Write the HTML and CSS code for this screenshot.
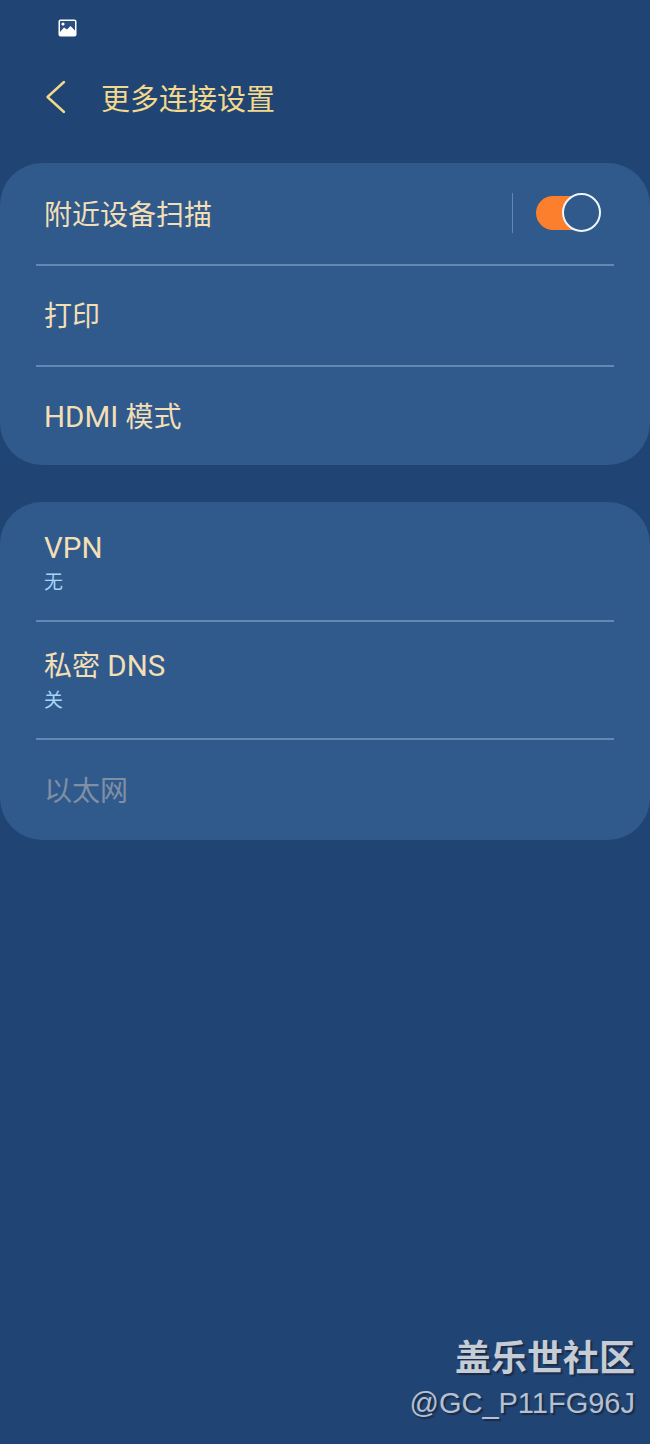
FILE: index.html
```html
<!DOCTYPE html>
<html>
    <head>
        <meta charset="UTF-8">
        <title>更多连接设置</title>
        <link rel="stylesheet" href="styles.css">
    </head>
    <body>
        <div class="status">
            <svg class="pic-icon" width="20" height="18" viewBox="0 0 20 18">
                <rect x="0.5" y="0.5" width="18" height="17" rx="2" fill="#fff"/>
                <rect x="2" y="2" width="15" height="11" fill="#2a4f80"/>
                <circle cx="5" cy="5" r="1.6" fill="#fff"/>
                <path d="M2 13 L6 8.5 L9 10.5 L12.5 7 L17 11.5 V15 H2 Z" fill="#fff"/>
            </svg>
        </div>
        <div class="header">
            <svg class="back" width="22" height="36" viewBox="0 0 22 36">
                <path d="M20 2 L3.500 17 L20 32" fill="none" stroke="#f3d98b" stroke-width="2.400" stroke-linecap="round" stroke-linejoin="round"/>
            </svg>
            <div class="title">更多连接设置</div>
        </div>
        <div class="card">
            <div class="row">
                <div class="label">附近设备扫描</div>
                <div class="side">
                    <div class="split"></div>
                    <div class="switch"><div class="knob"></div></div>
                </div>
            </div>
            <div class="row">
                <div class="label">打印</div>
            </div>
            <div class="row end">
                <div class="label"><span class="latin">HDMI </span>模式</div>
            </div>
        </div>
        <div class="card">
            <div class="row tall">
                <div class="stack">
                    <div class="label"><span class="latin">VPN</span></div>
                    <div class="sub">无</div>
                </div>
            </div>
            <div class="row tall">
                <div class="stack">
                    <div class="label">私密<span class="latin"> DNS</span></div>
                    <div class="sub">关</div>
                </div>
            </div>
            <div class="row last">
                <div class="label off">以太网</div>
            </div>
        </div>
        <div class="mark">
            <div class="mark-big">盖乐世社区</div>
            <div class="mark-small">@GC_P11FG96J</div>
        </div>
    </body>
</html>
```
FILE: styles.css
```css
html, body{
    margin: 0;
    padding: 0;
}
body{
    width: 650px;
    height: 1444px;
    position: relative;
    overflow: hidden;
    background: #204473;
    font-family: "Roboto", "Noto Sans CJK SC", sans-serif;
}
.status{
    height: 56px;
    padding-left: 58px;
    display: flex;
    align-items: center;
}
.header{
    height: 84px;
    padding: 0 0 0 44px;
    display: flex;
    align-items: center;
}
.title{
    margin-left: 35px;
    margin-top: -2px;
    font-size: 29px;
    color: #f3d98b;
}
.card{
    margin-bottom: 37px;
    padding-top: 2px;
    background: #305a8c;
    border-radius: 42px;
}
.header + .card{
    margin-top: 23px;
}
.row{
    height: 101px;
    margin: 0 36px;
    padding: 0 8px;
    display: flex;
    align-items: center;
    justify-content: space-between;
    border-bottom: 2px solid #6488b4;
    box-sizing: border-box;
}
.row.end{
    height: 98px;
    border-bottom: none;
}
.row.tall{
    height: 118px;
}
.row.last{
    height: 100px;
    padding-top: 2px;
    border-bottom: none;
}
.stack{
    padding-top: 3px;
}
.label{
    font-size: 28px;
    line-height: 34px;
    color: #f3dfb6;
}
.row > .label{
    padding-top: 2px;
}
.label.off{
    color: #7f8fa6;
}
.latin{
    font-size: 29.5px;
}
.sub{
    margin-top: 4px;
    font-size: 19px;
    line-height: 26px;
    color: #a6d4fb;
}
.side{
    display: flex;
    align-items: center;
    margin-top: -3px;
}
.split{
    width: 1px;
    height: 40px;
    background: #6488b4;
    margin-right: 23px;
}
.switch{
    width: 58px;
    height: 34px;
    border-radius: 17px;
    background: #fb7f2c;
    position: relative;
    margin-right: 12px;
}
.knob{
    position: absolute;
    right: -7px;
    top: -3px;
    width: 35px;
    height: 35px;
    border: 2px solid #eef6fb;
    border-radius: 50%;
    background: #305a8c;
}
.mark{
    position: absolute;
    right: 15px;
    top: 1336px;
    text-align: right;
}
.mark-big{
    font-size: 36px;
    line-height: 46px;
    font-weight: 700;
    color: #c6ccd6;
    text-shadow: 2px 2px 1px #1a2c48;
}
.mark-small{
    font-family: "Liberation Sans", sans-serif;
    font-size: 29px;
    line-height: 42px;
    color: #b6c0d0;
    text-shadow: 2px 2px 1px #1a2c48;
}
```
